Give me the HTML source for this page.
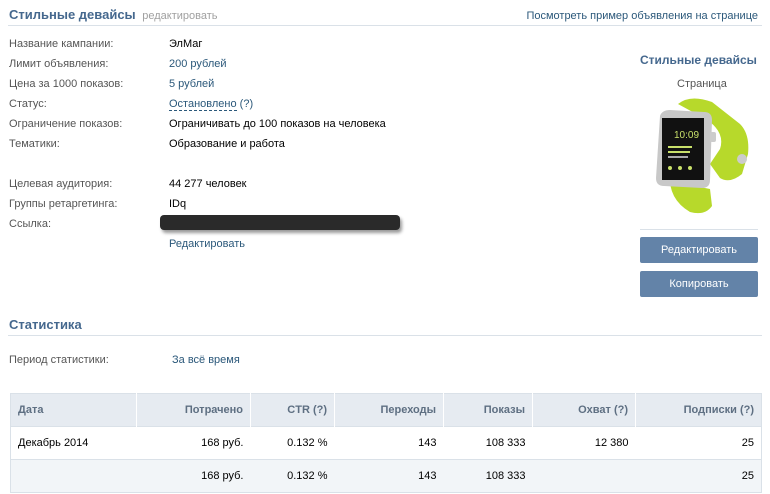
<!DOCTYPE html>
<html><head><meta charset="utf-8"><style>
*{margin:0;padding:0;box-sizing:border-box}
body{width:770px;height:494px;background:#fff;font-family:"Liberation Sans","DejaVu Sans",sans-serif;font-size:11px;color:#000;position:relative;overflow:hidden}
.a{position:absolute;white-space:nowrap}
.g{color:#555}
.b{color:#2b587a}
.h{font-weight:bold;color:#45688e;font-size:13px}
.line{position:absolute;height:1px;background:#dae1e8}
table{position:absolute;left:10px;top:393px;width:752px;border-collapse:collapse;border:1px solid #dae1e8}
td,th{height:33px;padding:0 7px;text-align:right;font-size:11px}
th{background:#e6ebf1;color:#5e6f82;font-weight:bold;border-right:1px solid #fff}
td{border-top:1px solid #dae1e8}
tr.f td{background:#f2f5f8}
.btn{position:absolute;left:640px;width:118px;height:26px;background:#6383a8;color:#fff;text-align:center;line-height:26px;border-radius:2px}
</style></head><body>
<div class="a h" style="left:9px;top:7px">Стильные девайсы <span style="font-weight:normal;color:#a0a0a0;font-size:11px;margin-left:3px">редактировать</span></div>
<div class="a b" style="right:12px;top:10px">Посмотреть пример объявления на странице</div>
<div class="line" style="left:8px;top:25px;width:754px"></div>

<div class="a g" style="left:9px;top:38px">Название кампании:</div><div class="a" style="left:169px;top:38px">ЭлМаг</div>
<div class="a g" style="left:9px;top:58px">Лимит объявления:</div><div class="a b" style="left:169px;top:58px">200 рублей</div>
<div class="a g" style="left:9px;top:78px">Цена за 1000 показов:</div><div class="a b" style="left:169px;top:78px">5 рублей</div>
<div class="a g" style="left:9px;top:98px">Статус:</div><div class="a b" style="left:169px;top:98px"><span style="border-bottom:1px dashed #2b587a">Остановлено</span> (?)</div>
<div class="a g" style="left:9px;top:118px">Ограничение показов:</div><div class="a" style="left:169px;top:118px">Ограничивать до 100 показов на человека</div>
<div class="a g" style="left:9px;top:138px">Тематики:</div><div class="a" style="left:169px;top:138px">Образование и работа</div>
<div class="a g" style="left:9px;top:178px">Целевая аудитория:</div><div class="a" style="left:169px;top:178px">44 277 человек</div>
<div class="a g" style="left:9px;top:198px">Группы ретаргетинга:</div><div class="a" style="left:169px;top:198px">IDq</div>
<div class="a g" style="left:9px;top:218px">Ссылка:</div>
<div class="a" style="left:160px;top:215px;width:240px;height:15px;background:#2a2a2a;border-radius:4px;box-shadow:2px 3px 3px rgba(0,0,0,.4)"></div>
<div class="a b" style="left:169px;top:238px">Редактировать</div>

<div class="a h" style="left:640px;top:53px;font-size:12px">Стильные девайсы</div>
<div class="a g" style="left:677px;top:78px">Страница</div>
<svg class="a" style="left:650px;top:94px" width="105" height="122" viewBox="0 0 105 122">
<path d="M28 10 Q40 0 62 8 L90 30 Q100 40 98 60 L92 80 Q80 90 70 84 L60 70 L70 55 Q75 40 60 28 L50 22Z" fill="#b7d92b"/>
<path d="M20 80 Q18 105 40 118 Q55 122 62 112 L60 95 L35 90Z" fill="#b7d92b"/>
<circle cx="92" cy="65" r="5" fill="#ccc"/>
<path d="M10 22 Q12 16 20 16 L54 18 Q62 18 62 26 L60 86 Q60 94 52 94 L14 92 Q6 92 6 84Z" fill="#c8c8c8"/>
<path d="M12 24 L54 24 L54 86 L12 86Z" fill="#111"/>
<rect x="60" y="38" width="6" height="10" rx="2" fill="#ccc"/>
<text x="24" y="44" fill="#c8e06a" font-size="10" font-family="Liberation Sans">10:09</text>
<rect x="18" y="52" width="24" height="2" fill="#c8e06a"/><rect x="18" y="57" width="22" height="2" fill="#c8e06a"/><rect x="18" y="62" width="20" height="2" fill="#aaa"/>
<circle cx="20" cy="74" r="2" fill="#c8e06a"/><circle cx="30" cy="74" r="2" fill="#c8e06a"/><circle cx="40" cy="74" r="2" fill="#c8e06a"/>
</svg>
<div class="line" style="left:640px;top:229px;width:118px"></div>
<div class="btn" style="top:237px">Редактировать</div>
<div class="btn" style="top:271px">Копировать</div>

<div class="a h" style="left:9px;top:317px">Статистика</div>
<div class="line" style="left:8px;top:335px;width:754px"></div>
<div class="a g" style="left:9px;top:354px">Период статистики:</div><div class="a b" style="left:172px;top:354px">За всё время</div>

<table>
<tr><th style="text-align:left;width:126px">Дата</th><th style="width:114px">Потрачено</th><th style="width:84px">CTR (?)</th><th style="width:109px">Переходы</th><th style="width:89px">Показы</th><th style="width:103px">Охват (?)</th><th style="border-right:0">Подписки (?)</th></tr>
<tr><td style="text-align:left">Декабрь 2014</td><td>168 руб.</td><td>0.132 %</td><td>143</td><td>108 333</td><td>12 380</td><td>25</td></tr>
<tr class="f"><td></td><td>168 руб.</td><td>0.132 %</td><td>143</td><td>108 333</td><td></td><td>25</td></tr>
</table>
</body></html>
